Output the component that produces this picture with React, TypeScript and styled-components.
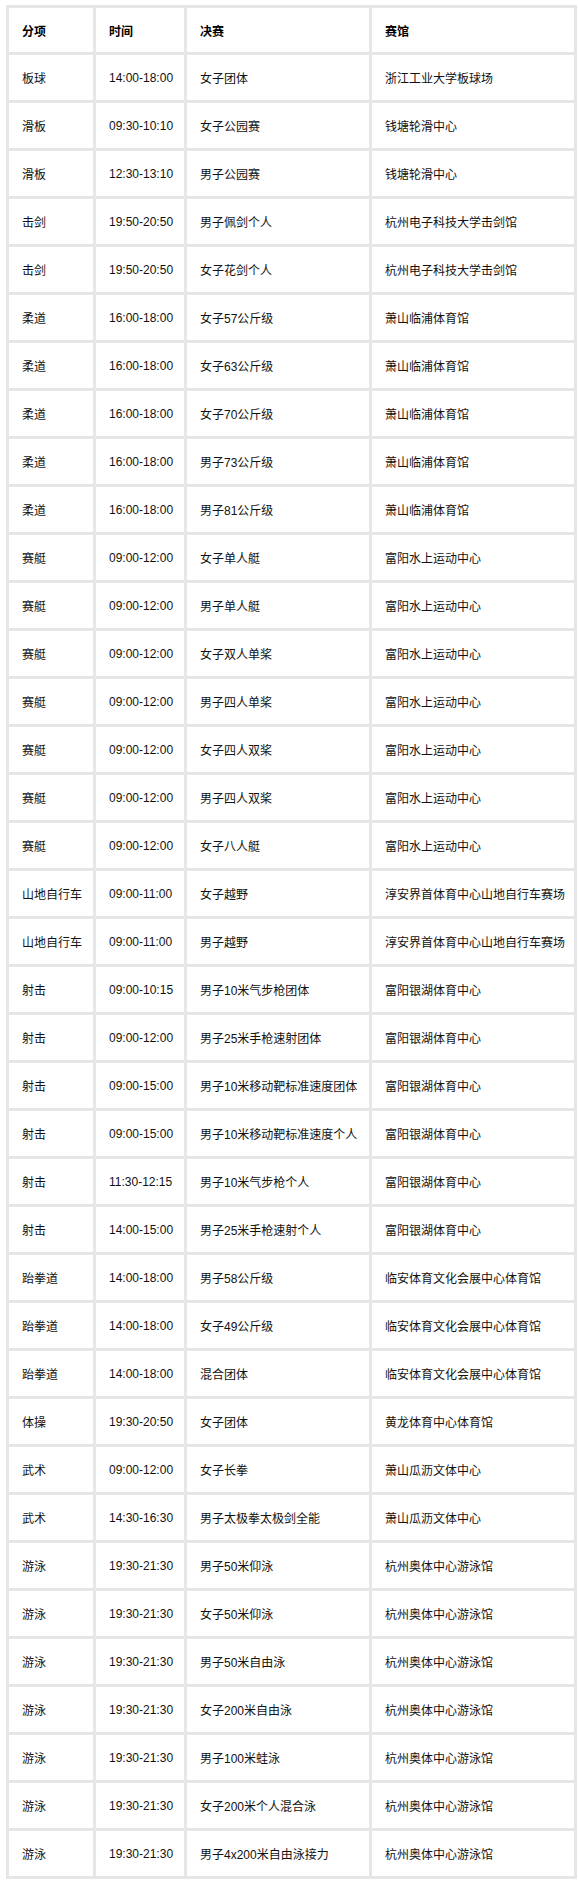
import React from 'react'
import styled, {createGlobalStyle} from 'styled-components'

interface Final {
    sport: string
    time: string
    event: string
    venue: string
}

const GlobalStyle = createGlobalStyle`
    html, body {
        margin: 0;
        padding: 0;
        background: #fff;
    }
`

const Page = styled.div`
    padding: 5px 0 0 6px;
    font-family: "Liberation Sans", "Noto Sans CJK SC", sans-serif;
    font-size: 12px;
`

const Grid = styled.div`
    display: grid;
    grid-template-columns: 84px 88px 182px 202px;
    grid-template-rows: 44px;
    grid-auto-rows: 45px;
    gap: 3px;
    padding: 3px;
    width: max-content;
    background: #e6e6e6;
`

const Cell = styled.div<{$head?: boolean}>`
    display: flex;
    align-items: center;
    padding-left: 13px;
    background: #fff;
    color: ${p => (p.$head ? '#000' : '#111')};
    font-weight: ${p => (p.$head ? 700 : 400)};
    white-space: nowrap;
`

const finals: Final[] = [
    {sport: '板球', time: '14:00-18:00', event: '女子团体', venue: '浙江工业大学板球场'},
    {sport: '滑板', time: '09:30-10:10', event: '女子公园赛', venue: '钱塘轮滑中心'},
    {sport: '滑板', time: '12:30-13:10', event: '男子公园赛', venue: '钱塘轮滑中心'},
    {sport: '击剑', time: '19:50-20:50', event: '男子佩剑个人', venue: '杭州电子科技大学击剑馆'},
    {sport: '击剑', time: '19:50-20:50', event: '女子花剑个人', venue: '杭州电子科技大学击剑馆'},
    {sport: '柔道', time: '16:00-18:00', event: '女子57公斤级', venue: '萧山临浦体育馆'},
    {sport: '柔道', time: '16:00-18:00', event: '女子63公斤级', venue: '萧山临浦体育馆'},
    {sport: '柔道', time: '16:00-18:00', event: '女子70公斤级', venue: '萧山临浦体育馆'},
    {sport: '柔道', time: '16:00-18:00', event: '男子73公斤级', venue: '萧山临浦体育馆'},
    {sport: '柔道', time: '16:00-18:00', event: '男子81公斤级', venue: '萧山临浦体育馆'},
    {sport: '赛艇', time: '09:00-12:00', event: '女子单人艇', venue: '富阳水上运动中心'},
    {sport: '赛艇', time: '09:00-12:00', event: '男子单人艇', venue: '富阳水上运动中心'},
    {sport: '赛艇', time: '09:00-12:00', event: '女子双人单桨', venue: '富阳水上运动中心'},
    {sport: '赛艇', time: '09:00-12:00', event: '男子四人单桨', venue: '富阳水上运动中心'},
    {sport: '赛艇', time: '09:00-12:00', event: '女子四人双桨', venue: '富阳水上运动中心'},
    {sport: '赛艇', time: '09:00-12:00', event: '男子四人双桨', venue: '富阳水上运动中心'},
    {sport: '赛艇', time: '09:00-12:00', event: '女子八人艇', venue: '富阳水上运动中心'},
    {sport: '山地自行车', time: '09:00-11:00', event: '女子越野', venue: '淳安界首体育中心山地自行车赛场'},
    {sport: '山地自行车', time: '09:00-11:00', event: '男子越野', venue: '淳安界首体育中心山地自行车赛场'},
    {sport: '射击', time: '09:00-10:15', event: '男子10米气步枪团体', venue: '富阳银湖体育中心'},
    {sport: '射击', time: '09:00-12:00', event: '男子25米手枪速射团体', venue: '富阳银湖体育中心'},
    {sport: '射击', time: '09:00-15:00', event: '男子10米移动靶标准速度团体', venue: '富阳银湖体育中心'},
    {sport: '射击', time: '09:00-15:00', event: '男子10米移动靶标准速度个人', venue: '富阳银湖体育中心'},
    {sport: '射击', time: '11:30-12:15', event: '男子10米气步枪个人', venue: '富阳银湖体育中心'},
    {sport: '射击', time: '14:00-15:00', event: '男子25米手枪速射个人', venue: '富阳银湖体育中心'},
    {sport: '跆拳道', time: '14:00-18:00', event: '男子58公斤级', venue: '临安体育文化会展中心体育馆'},
    {sport: '跆拳道', time: '14:00-18:00', event: '女子49公斤级', venue: '临安体育文化会展中心体育馆'},
    {sport: '跆拳道', time: '14:00-18:00', event: '混合团体', venue: '临安体育文化会展中心体育馆'},
    {sport: '体操', time: '19:30-20:50', event: '女子团体', venue: '黄龙体育中心体育馆'},
    {sport: '武术', time: '09:00-12:00', event: '女子长拳', venue: '萧山瓜沥文体中心'},
    {sport: '武术', time: '14:30-16:30', event: '男子太极拳太极剑全能', venue: '萧山瓜沥文体中心'},
    {sport: '游泳', time: '19:30-21:30', event: '男子50米仰泳', venue: '杭州奥体中心游泳馆'},
    {sport: '游泳', time: '19:30-21:30', event: '女子50米仰泳', venue: '杭州奥体中心游泳馆'},
    {sport: '游泳', time: '19:30-21:30', event: '男子50米自由泳', venue: '杭州奥体中心游泳馆'},
    {sport: '游泳', time: '19:30-21:30', event: '女子200米自由泳', venue: '杭州奥体中心游泳馆'},
    {sport: '游泳', time: '19:30-21:30', event: '男子100米蛙泳', venue: '杭州奥体中心游泳馆'},
    {sport: '游泳', time: '19:30-21:30', event: '女子200米个人混合泳', venue: '杭州奥体中心游泳馆'},
    {sport: '游泳', time: '19:30-21:30', event: '男子4x200米自由泳接力', venue: '杭州奥体中心游泳馆'}
]

const headers = ['分项', '时间', '决赛', '赛馆']

export default function App() {
    return (
        <Page>
            <GlobalStyle/>
            <Grid>
                {headers.map(h => (
                    <Cell key={h} $head>{h}</Cell>
                ))}
                {finals.map((f, i) => (
                    <React.Fragment key={i}>
                        <Cell>{f.sport}</Cell>
                        <Cell>{f.time}</Cell>
                        <Cell>{f.event}</Cell>
                        <Cell>{f.venue}</Cell>
                    </React.Fragment>
                ))}
            </Grid>
        </Page>
    )
}
